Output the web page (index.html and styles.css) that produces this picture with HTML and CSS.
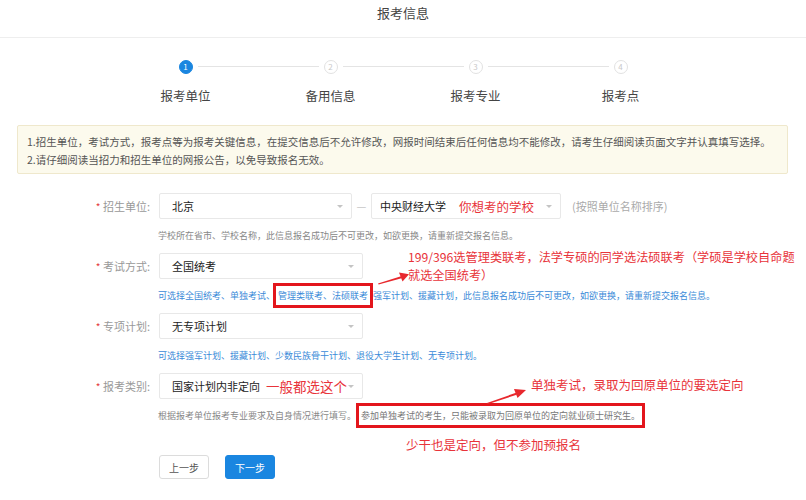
FILE: index.html
```html
<!DOCTYPE html>
<html lang="zh-CN">
<head>
<meta charset="utf-8">
<title>报考信息</title>
<link rel="stylesheet" href="styles.css">
</head>
<body>
<div class="page">
  <header class="top">报考信息</header>

  <ol class="steps">
    <li class="step active"><span class="dot">1</span><span class="step-label">报考单位</span></li>
    <li class="step"><span class="dot">2</span><span class="step-label">备用信息</span></li>
    <li class="step"><span class="dot">3</span><span class="step-label">报考专业</span></li>
    <li class="step"><span class="dot">4</span><span class="step-label">报考点</span></li>
  </ol>

  <div class="notice">
    <p>1.招生单位，考试方式，报考点等为报考关键信息，在提交信息后不允许修改，网报时间结束后任何信息均不能修改，请考生仔细阅读页面文字并认真填写选择。</p>
    <p>2.请仔细阅读当招力和招生单位的网报公告，以免导致报名无效。</p>
  </div>

  <form class="form">
    <div class="field">
      <div class="row">
        <label class="label"><span class="req">*</span> 招生单位:</label>
        <div class="select w193"><span>北京</span><i class="caret"></i></div>
        <span class="dash">—</span>
        <div class="select w190"><span>中央财经大学</span><span class="note note-in1">你想考的学校</span><i class="caret"></i></div>
        <span class="aside">(按照单位名称排序)</span>
      </div>
      <p class="help">学校所在省市、学校名称，此信息报名成功后不可更改，如欲更换，请重新提交报名信息。</p>
    </div>

    <div class="field">
      <div class="row">
        <label class="label"><span class="req">*</span> 考试方式:</label>
        <div class="select w204"><span>全国统考</span><i class="caret"></i></div>
      </div>
      <p class="help blue">可选择全国统考、单独考试、<span class="mark">管理类联考、法硕联考</span>强军计划、援藏计划，此信息报名成功后不可更改，如欲更换，请重新提交报名信息。</p>
    </div>

    <div class="field">
      <div class="row">
        <label class="label"><span class="req">*</span> 专项计划:</label>
        <div class="select w204"><span>无专项计划</span><i class="caret"></i></div>
      </div>
      <p class="help blue">可选择强军计划、援藏计划、少数民族骨干计划、退役大学生计划、无专项计划。</p>
    </div>

    <div class="field">
      <div class="row">
        <label class="label"><span class="req">*</span> 报考类别:</label>
        <div class="select w204"><span>国家计划内非定向</span><span class="note note-in2">一般都选这个</span><i class="caret"></i></div>
      </div>
      <p class="help">根据报考单位报考专业要求及自身情况进行填写。<span class="mark mark2">参加单独考试的考生，只能被录取为回原单位的定向就业硕士研究生。</span></p>
    </div>

    <div class="actions">
      <button type="button" class="btn">上一步</button>
      <button type="button" class="btn primary">下一步</button>
    </div>
  </form>

  <div class="anno anno-exam">
    <div>199/396选管理类联考，法学专硕的同学选法硕联考（学硕是学校自命题</div>
    <div>就选全国统考）</div>
  </div>
  <div class="anno anno-single">单独考试，录取为回原单位的要选定向</div>
  <div class="anno anno-shaogan">少干也是定向，但不参加预报名</div>

  <svg class="arrow arrow1" width="36" height="16" viewBox="0 0 36 16">
    <polygon points="1,13.5 24,6.2 24.6,8.2 1.6,14.6" fill="#e8282d"/>
    <polygon points="22,2.5 32,4.2 25.5,11.5" fill="#e8282d"/>
  </svg>
  <svg class="arrow arrow2" width="44" height="20" viewBox="0 0 44 20">
    <polygon points="1,17 30,6.8 30.7,8.8 1.7,18.2" fill="#e8282d"/>
    <polygon points="28,3 40,4 31.5,12" fill="#e8282d"/>
  </svg>
</div>
</body>
</html>
```

FILE: styles.css
```css
* { box-sizing: border-box; }

html, body {
  margin: 0;
  padding: 0;
  background: #fff;
}

body {
  font-family: "Noto Sans CJK SC", "Microsoft YaHei", "Noto Sans", sans-serif;
  color: #333;
}

.page {
  position: relative;
  width: 806px;
  height: 500px;
  overflow: hidden;
}

.top {
  height: 38px;
  padding-top: 4px;
  line-height: 18px;
  font-size: 13px;
  text-align: center;
  color: #444;
  border-bottom: 1px solid #eeeeee;
}

/* steps */
.steps {
  list-style: none;
  margin: 22px 0 0 113px;
  padding: 0;
  display: grid;
  grid-template-columns: repeat(4, 145px);
}

.step {
  position: relative;
  display: flex;
  flex-direction: column;
  align-items: center;
}

.step:not(:last-child)::after {
  content: "";
  position: absolute;
  top: 6px;
  left: calc(50% + 12px);
  width: 121px;
  height: 1px;
  background: #e4e4e4;
}

.dot {
  width: 14px;
  height: 14px;
  border-radius: 50%;
  border: 1px solid #e2e2e2;
  color: #c8c8c8;
  font-size: 8px;
  line-height: 12px;
  text-align: center;
  background: #fff;
}

.step.active .dot {
  background: #1a86e0;
  border-color: #1a86e0;
  color: #fff;
}

.step-label {
  margin-top: 14px;
  font-size: 12.5px;
  line-height: 16px;
  color: #444;
}

/* notice */
.notice {
  margin: 21px 18px 0 17px;
  height: 49px;
  padding: 7px 9px 0;
  background: #fcfaed;
  border: 1px solid #efe8cc;
  border-radius: 2px;
}

.notice p {
  margin: 0;
  font-size: 10.5px;
  line-height: 18px;
  color: #555;
  white-space: nowrap;
}

/* form */
.form {
  margin-top: 19px;
}

.field {
  margin-bottom: 8px;
}

.row {
  display: flex;
  align-items: center;
  height: 26px;
}

.label {
  width: 150px;
  margin-right: 9px;
  text-align: right;
  font-size: 11px;
  color: #999;
}

.req {
  color: #e4393c;
  font-size: 10px;
}

.select {
  position: relative;
  display: flex;
  align-items: center;
  height: 26px;
  padding-left: 12px;
  border: 1px solid #e8e8e8;
  border-radius: 2px;
  font-size: 11px;
  color: #222;
  background: #fff;
}

.w193 { width: 193px; }
.w190 { width: 190px; padding-left: 8px; }
.w204 { width: 204px; }

.caret {
  position: absolute;
  right: 8px;
  top: 11px;
  width: 0;
  height: 0;
  border-left: 3px solid transparent;
  border-right: 3px solid transparent;
  border-top: 3px solid #c4c4c4;
}

.dash {
  width: 19px;
  text-align: center;
  color: #c8c8c8;
  font-size: 11px;
}

.aside {
  margin-left: 11px;
  font-size: 11px;
  color: #aaa;
}

.note {
  color: #e8333a;
  font-size: 12.5px;
}

.note-in1 { margin-left: 13px; }
.note-in2 { margin-left: 6px; font-size: 13.5px; }

.help {
  margin: 8px 0 0 158px;
  height: 18px;
  font-size: 9px;
  line-height: 18px;
  color: #888;
  white-space: nowrap;
}

.help.blue {
  color: #3a8ad8;
}

.mark {
  padding: 3px 2px;
  margin-left: -2px;
  border: 3px solid #e3161c;
}

.mark2 {
  color: #777;
  margin-left: 0;
}

.actions {
  display: flex;
  gap: 16px;
  margin: 30px 0 0 159px;
}

.btn {
  width: 50px;
  height: 24px;
  padding: 0;
  border: 1px solid #dcdcdc;
  border-radius: 3px;
  background: #fff;
  font-family: inherit;
  font-size: 10px;
  color: #555;
}

.btn.primary {
  background: #1a86e0;
  border-color: #1a86e0;
  color: #fff;
}

/* annotations overlaid on the screenshot */
.anno {
  position: absolute;
  color: #e8333a;
  font-size: 12.2px;
  line-height: 17.5px;
  white-space: nowrap;
}

.anno-exam { left: 408px; top: 249px; }
.anno-single { left: 531px; top: 376px; font-size: 12.5px; }
.anno-shaogan { left: 406px; top: 436px; font-size: 12.5px; }

.arrow { position: absolute; }
.arrow1 { left: 377px; top: 270px; }
.arrow2 { left: 486px; top: 386px; }
```
